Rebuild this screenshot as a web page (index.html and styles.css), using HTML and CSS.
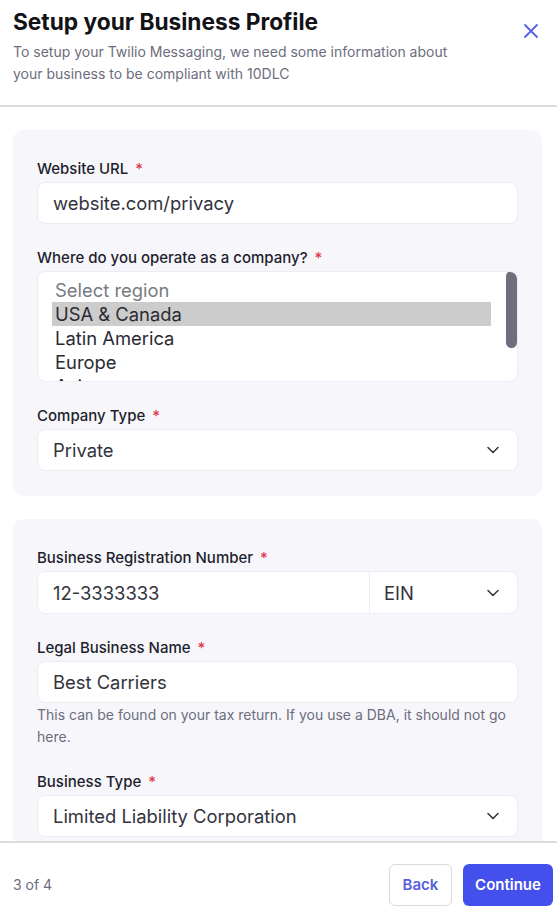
FILE: index.html
```html
<!DOCTYPE html>
<html>

<head>
  <title>Setup your Business Profile</title>
  <link rel="stylesheet" href="styles.css">
</head>

<body>
  <div class="modal">
    <div class="modal-header">
      <div class="header-text">
        <h1 class="title">Setup your Business Profile</h1>
        <p class="subtitle">To setup your Twilio Messaging, we need some information about your business to be compliant with 10DLC</p>
      </div>
      <button class="close-btn" aria-label="Close">
        <svg width="14" height="14" viewBox="0 0 14 14">
          <path d="M1 1L13 13M13 1L1 13" stroke="#5661e8" stroke-width="1.8" stroke-linecap="round" />
        </svg>
      </button>
    </div>

    <div class="modal-body">
      <div class="card">
        <div class="field">
          <label class="label">Website URL <span class="req">*</span></label>
          <input class="input" value="website.com/privacy" />
        </div>

        <div class="field">
          <label class="label">Where do you operate as a company? <span class="req">*</span></label>
          <div class="listbox">
            <div class="option placeholder">Select region</div>
            <div class="option selected">USA &amp; Canada</div>
            <div class="option">Latin America</div>
            <div class="option">Europe</div>
            <div class="option">Asia</div>
            <div class="option">Africa</div>
            <div class="scroll-thumb"></div>
          </div>
        </div>

        <div class="field">
          <label class="label">Company Type <span class="req">*</span></label>
          <div class="select">
            <span>Private</span>
            <svg class="chevron" width="12" height="8" viewBox="0 0 12 8">
              <path d="M1 1.5L6 6.5L11 1.5" fill="none" stroke="#333" stroke-width="1.5" stroke-linecap="round" stroke-linejoin="round" />
            </svg>
          </div>
        </div>
      </div>

      <div class="card">
        <div class="field">
          <label class="label">Business Registration Number <span class="req">*</span></label>
          <div class="group">
            <input class="group-input" value="12-3333333" />
            <div class="group-select">
              <span>EIN</span>
              <svg class="chevron" width="12" height="8" viewBox="0 0 12 8">
                <path d="M1 1.5L6 6.5L11 1.5" fill="none" stroke="#333" stroke-width="1.5" stroke-linecap="round" stroke-linejoin="round" />
              </svg>
            </div>
          </div>
        </div>

        <div class="field">
          <label class="label">Legal Business Name <span class="req">*</span></label>
          <input class="input" value="Best Carriers" />
          <p class="help">This can be found on your tax return. If you use a DBA, it should not go here.</p>
        </div>

        <div class="field">
          <label class="label">Business Type <span class="req">*</span></label>
          <div class="select">
            <span>Limited Liability Corporation</span>
            <svg class="chevron" width="12" height="8" viewBox="0 0 12 8">
              <path d="M1 1.5L6 6.5L11 1.5" fill="none" stroke="#333" stroke-width="1.5" stroke-linecap="round" stroke-linejoin="round" />
            </svg>
          </div>
        </div>
      </div>
    </div>

    <div class="modal-footer">
      <span class="step">3 of 4</span>
      <div class="actions">
        <button class="btn btn-back">Back</button>
        <button class="btn btn-primary">Continue</button>
      </div>
    </div>
  </div>
</body>

</html>
```

FILE: styles.css
```css
* {
  box-sizing: border-box;
}

body {
  margin: 0;
  background: #fff;
  font-family: Inter, "Noto Sans", sans-serif;
  color: #1e1e2d;
}

.modal {
  display: flex;
  flex-direction: column;
  height: 917px;
  overflow: hidden;
}

.modal-header {
  display: flex;
  justify-content: space-between;
  padding: 8px 19px 20px 13px;
  border-bottom: 2px solid #dcdce0;
}

.title {
  margin: 0;
  font-size: 22.7px;
  line-height: 28px;
  font-weight: 700;
  color: #121217;
}

.subtitle {
  margin: 5px 0 0;
  width: 440px;
  font-size: 14px;
  line-height: 22px;
  color: #6d6d7d;
}

.close-btn {
  background: none;
  border: none;
  padding: 0;
  margin-top: 16px;
  width: 14px;
  height: 14px;
  display: flex;
}

.modal-body {
  flex: 1;
  overflow: hidden;
  padding: 23px 15px 0 13px;
  display: flex;
  flex-direction: column;
  gap: 23px;
}

.card {
  background: #f7f7fb;
  border-radius: 10px;
  padding: 29px 24px 25px;
  display: flex;
  flex-direction: column;
  gap: 24px;
}

.label {
  display: block;
  font-size: 15px;
  line-height: 20px;
  font-weight: 500;
  color: #1e1e2d;
  margin-bottom: 3px;
}

.req {
  color: #e2374f;
  margin-left: 3px;
}

.input {
  display: block;
  width: 100%;
  height: 42px;
  border: 1px solid #ececf2;
  border-radius: 8px;
  background: #fff;
  padding: 0 15px;
  font-family: inherit;
  font-size: 18.4px;
  color: #33333d;
  outline: none;
}

.listbox {
  position: relative;
  height: 111px;
  border: 1px solid #ececf2;
  border-radius: 8px;
  background: #fff;
  padding: 6px 26px 7px 14px;
  overflow: hidden;
}

.scroll-thumb {
  position: absolute;
  top: -1px;
  right: 0;
  width: 11px;
  height: 77px;
  border-radius: 6px;
  background: #6f6e7c;
}

.option {
  font-size: 18.4px;
  line-height: 24px;
  padding: 0 3px;
  color: #2b2b33;
}

.option.placeholder {
  color: #7a7a82;
}

.option.selected {
  background: #cccccc;
}

.select {
  display: flex;
  align-items: center;
  justify-content: space-between;
  height: 42px;
  border: 1px solid #ececf2;
  border-radius: 8px;
  background: #fff;
  padding: 0 18px 0 15px;
  font-size: 18.4px;
  color: #33333d;
}

.group {
  display: flex;
  height: 43px;
  border: 1px solid #ececf2;
  border-radius: 8px;
  background: #fff;
  overflow: hidden;
}

.group-input {
  flex: 1;
  border: none;
  padding: 0 15px;
  font-family: inherit;
  font-size: 18.4px;
  color: #33333d;
  outline: none;
  min-width: 0;
}

.group-select {
  width: 148px;
  display: flex;
  align-items: center;
  justify-content: space-between;
  border-left: 1px solid #ececf2;
  padding: 0 18px 0 14px;
  font-size: 18.4px;
  color: #33333d;
}

.help {
  margin: 1px 0 0;
  font-size: 14px;
  line-height: 22px;
  color: #6d6d7d;
}

.modal-footer {
  flex-shrink: 0;
  height: 76px;
  border-top: 2px solid #dcdce0;
  display: flex;
  align-items: center;
  justify-content: space-between;
  padding: 9px 4px 0 13px;
}

.step {
  font-size: 14px;
  color: #6d6d7d;
}

.actions {
  display: flex;
  gap: 11px;
}

.btn {
  height: 42px;
  border-radius: 6px;
  font-family: inherit;
  font-size: 15px;
  font-weight: 600;
  cursor: pointer;
}

.btn-back {
  width: 63px;
  background: #fff;
  border: 1px solid #d9d9e2;
  color: #5660df;
}

.btn-primary {
  width: 90px;
  background: #4450eb;
  border: none;
  color: #fff;
}
```
